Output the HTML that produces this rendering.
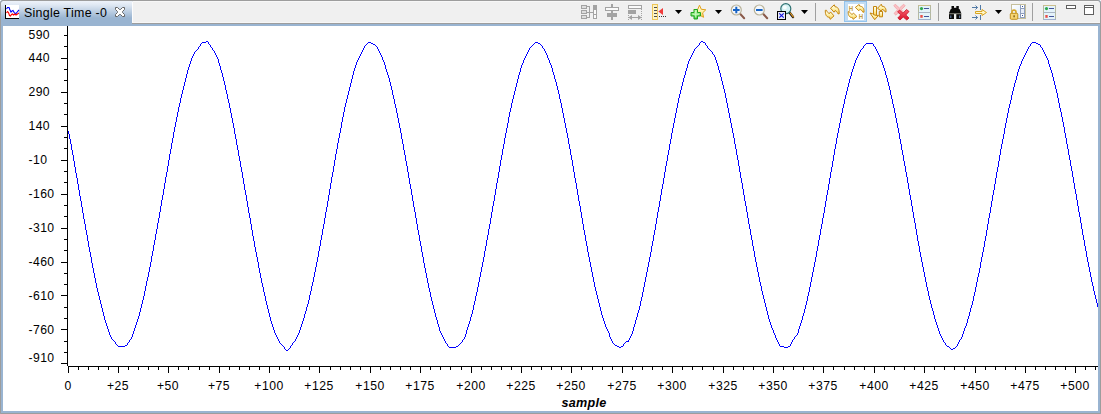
<!DOCTYPE html>
<html><head><meta charset="utf-8"><title>Single Time -0</title>
<style>
html,body{margin:0;padding:0;}
body{width:1101px;height:414px;overflow:hidden;background:#fff;position:relative;font-family:"Liberation Sans",sans-serif;color:#000;}
#frame{position:absolute;left:0;top:0;width:1101px;height:414px;background:#99b4d1;border-radius:3px 3px 0 0;}
#outer{position:absolute;left:0;top:0;width:1100px;height:413px;border-left:1px solid #9d9d9d;border-top:1px solid #9d9d9d;border-right:1px solid #9d9d9d;border-bottom:1px solid #9d9d9d;box-sizing:border-box;width:1101px;height:414px;border-radius:3px 3px 0 0;}
#tab{position:absolute;left:1px;top:1px;width:131px;height:25px;background:linear-gradient(#eef3fa 0px,#dfe8f3 4px,#99b4d1 17px,#99b4d1 25px);border-radius:2px 0 0 0;}
#tabtext{position:absolute;left:24px;top:6px;font-size:12.4px;letter-spacing:0.28px;line-height:14px;white-space:nowrap;}
#bar{position:absolute;left:132px;top:1px;border-radius:0 2px 0 0;width:968px;height:22px;background:#f0f0f0;border-left:1px solid #fcfcfc;border-top:1px solid #f7f7f7;border-bottom:1px solid #f7f7f7;box-sizing:border-box;}
#barline{position:absolute;left:132px;top:23px;width:968px;height:1px;background:#9d9d9d;}
#plot{position:absolute;left:3px;top:26px;width:1095px;height:385px;background:#fff;}
.yl{position:absolute;left:28.5px;width:40px;letter-spacing:0.4px;font-size:12.2px;line-height:16px;height:16px;white-space:nowrap;}
.xl{position:absolute;top:378px;width:61px;text-align:center;letter-spacing:0.45px;font-size:12.2px;line-height:16px;height:16px;white-space:nowrap;}
#xlabel{position:absolute;left:534px;width:100px;top:395px;text-align:center;font-weight:bold;font-style:italic;font-size:12.6px;line-height:16px;letter-spacing:0.3px;}
.ic{position:absolute;}
</style></head><body>
<div id="frame"></div>
<div id="tab"></div>
<div id="bar"></div>
<div id="barline"></div>
<div id="plot"></div>
<div id="outer"></div>
<div id="tabtext">Single Time -0</div>
<svg width="1101" height="26" viewBox="0 0 1101 26" style="position:absolute;left:0;top:0">
<defs>
<linearGradient id="gy" x1="0" y1="0" x2="0" y2="1"><stop offset="0" stop-color="#fffef2"/><stop offset="0.45" stop-color="#fff3b0"/><stop offset="1" stop-color="#f8d058"/></linearGradient>
<linearGradient id="gyr" x1="0" y1="1" x2="0" y2="0"><stop offset="0" stop-color="#fffef2"/><stop offset="0.45" stop-color="#fff3b0"/><stop offset="1" stop-color="#f8d058"/></linearGradient>
<linearGradient id="gg" x1="0" y1="0" x2="0" y2="1"><stop offset="0" stop-color="#c8f8b0"/><stop offset="1" stop-color="#3cc83c"/></linearGradient>
<linearGradient id="gr" x1="0" y1="0" x2="0" y2="1"><stop offset="0" stop-color="#f86070"/><stop offset="1" stop-color="#d81028"/></linearGradient>
<linearGradient id="gl" x1="0" y1="0" x2="1" y2="1"><stop offset="0" stop-color="#ffffff"/><stop offset="1" stop-color="#d4e6f6"/></linearGradient>
<path id="arrU" d="M0,3.4 L3.8,0 L4.5,2 C7,2 8.8,3.700 8.7,9 L7.5,9 C6.7,7.2 6,6.2 4.500,5.800 L3.500,7.400 Z"/>
<g id="dd"><path d="M0,0 L7,0 L3.5,4 Z" fill="#000"/></g>
<g id="props">
 <rect x="0.5" y="0.5" width="12" height="14" fill="#e4f3fa" stroke="#b5b9a0"/>
 <path d="M0.5,7.5 H12.5" stroke="#a9b4c4" fill="none"/>
 <path d="M0.5,0.5 H12.5" stroke="#cdbf8c" fill="none"/>
 <path d="M0,14.5 H13" stroke="#9fb0cf" fill="none"/>
 <circle cx="3.500" cy="3.600" r="1.600" fill="#2fa84f"/>
 <rect x="2.300" y="10" width="2.400" height="2.800" fill="#e8504a"/>
 <rect x="6" y="3" width="5" height="1" fill="#44549a" shape-rendering="crispEdges"/>
 <rect x="6" y="11" width="5" height="1" fill="#44549a" shape-rendering="crispEdges"/>
</g>
</defs>

<!-- tab icon -->
<g shape-rendering="crispEdges">
<rect x="6" y="5" width="13" height="13" fill="#fff"/>
<rect x="5" y="5" width="1" height="14" fill="#000"/>
<rect x="5" y="18" width="14" height="1" fill="#000"/>
</g>
<polyline points="6.5,9 7.5,7.5 9,7.5 10,10 11,12 12,11 13,10.5 14.5,13 16,13.5 18,11 19,10" fill="none" stroke="#0000ff" stroke-width="1.1"/>
<polyline points="6.5,13 7.5,11.5 8.5,12.5 9.5,15.5 10.5,16 11.5,14.5 12.5,14 13.5,15 15,14 16,15 17.5,14 19,13" fill="none" stroke="#ff0000" stroke-width="1.1"/>

<!-- tab close X -->
<polygon points="115.5,7.5 117.5,7.5 119.5,9.5 120.5,9.5 122.5,7.5 124.5,7.5 124.5,9.5 122.5,11.5 122.5,12.5 124.5,14.5 124.5,16.5 122.5,16.5 120.5,14.5 119.5,14.5 117.5,16.5 115.5,16.5 115.5,14.5 117.5,12.5 117.5,11.5 115.5,9.5" fill="#fff" stroke="#646464" stroke-width="1" stroke-linejoin="miter"/>

<!-- icon1: disabled tree -->
<g shape-rendering="crispEdges" fill="none" stroke="#a3a3a3">
<rect x="581.5" y="5.5" width="5" height="3" fill="#dedede"/>
<rect x="581.5" y="10.5" width="5" height="3" fill="#dedede"/>
<rect x="581.5" y="15.5" width="5" height="3" fill="#dedede"/>
<path d="M587,6.5 H589.5 V17.5 H587 M587,12.5 H593"/>
<rect x="593.5" y="5.5" width="3" height="13" fill="#fafafa"/>
<rect x="593" y="5" width="4" height="5" fill="#a3a3a3" stroke="none"/>
<path d="M593,14.5 H597"/>
</g>
<!-- icon2 -->
<g shape-rendering="crispEdges">
<rect x="611" y="4" width="2" height="16" fill="#a3a3a3"/>
<rect x="605.5" y="7.5" width="13" height="3" fill="#fafafa" stroke="#a3a3a3"/>
<rect x="607" y="13" width="10" height="4" fill="#a3a3a3"/>
</g>
<!-- icon3 -->
<g shape-rendering="crispEdges">
<rect x="628.5" y="5.5" width="13" height="3" fill="#fafafa" stroke="#a3a3a3"/>
<rect x="628" y="10" width="8" height="4" fill="#a3a3a3"/>
<path d="M641.5,9 V20 M628.5,15 V20" stroke="#a3a3a3" stroke-dasharray="1 1" fill="none"/>
<rect x="629" y="17" width="12" height="1" fill="#a3a3a3"/>
</g>
<path d="M628.3,17.500 L632,15 L632,20 Z M641.700,17.500 L638,15 L638,20 Z" fill="#a3a3a3"/>

<!-- icon4 ruler -->
<g shape-rendering="crispEdges">
<rect x="652.5" y="4.5" width="5" height="15" fill="#fdf3c4" stroke="#edc558"/>
<rect x="654" y="7" width="3" height="1" fill="#4a4a4a"/>
<rect x="654" y="10" width="3" height="1" fill="#4a4a4a"/>
<rect x="654" y="13" width="3" height="1" fill="#4a4a4a"/>
<rect x="654" y="16" width="3" height="1" fill="#4a4a4a"/>
<rect x="659" y="16" width="1" height="1" fill="#333"/><rect x="661" y="16" width="1" height="1" fill="#333"/><rect x="663" y="16" width="1" height="1" fill="#333"/><rect x="665" y="16" width="1" height="1" fill="#333"/>
</g>
<path d="M658.3,11.5 L663,8 L663,15 Z" fill="#f03c3c"/>
<use href="#dd" x="675" y="10"/>

<!-- icon5 star + plus -->
<path d="M699.5,5.2 L701.3,9.3 L705.8,9.8 L702.6,12.9 L703.6,17.3 L699.5,15.1 L696,17 L696.6,12.9 L693.8,9.8 L697.8,9.3 Z" fill="url(#gy)" stroke="#e2a21c" stroke-width="1" stroke-linejoin="round"/>
<path d="M694,9.5 H697.5 V12.5 H700.5 V16 H697.5 V19 H694 V16 H691 V12.5 H694 Z" fill="url(#gg)" stroke="#1fa61f" stroke-width="1" stroke-linejoin="round"/>
<path d="M695.200,11 H696.300 V13.700 H699 V14.800 H696.300 V17.500 H695.200 V14.800 H692.500 V13.700 H695.200 Z" fill="#d8ffd0" opacity="0.85"/>
<use href="#dd" x="715" y="10"/>

<!-- zoom in -->
<path d="M740.3,14 L744.200,18.200" stroke="#8a5a4a" stroke-width="2" stroke-linecap="round"/>
<circle cx="736.3" cy="10" r="5" fill="#f4f7fb" stroke="#b9b39a" stroke-width="1.2"/>
<path d="M733,10 H739.6 M736.3,6.7 V13.3" stroke="#1763c4" stroke-width="2"/>
<!-- zoom out -->
<path d="M763.3,14 L767.200,18.200" stroke="#8a5a4a" stroke-width="2" stroke-linecap="round"/>
<circle cx="759.3" cy="10" r="5" fill="#f4f7fb" stroke="#b9b39a" stroke-width="1.2"/>
<path d="M756,10 H762.6" stroke="#1763c4" stroke-width="2"/>
<!-- zoom reset -->
<path d="M789.5,12.5 L793,17" stroke="#1a1a1a" stroke-width="2.4" stroke-linecap="round"/>
<path d="M790.3,13 L793.3,16.8" stroke="#f0a020" stroke-width="1.1" stroke-linecap="round"/>
<circle cx="785.8" cy="8.7" r="5" fill="#d6f2f4" stroke="#2f7272" stroke-width="1.2"/>
<circle cx="784.8" cy="7.5" r="2" fill="#ffffff" opacity="0.8"/>
<rect x="777.5" y="11.5" width="8" height="8" fill="#e6e9f6" stroke="#000" shape-rendering="crispEdges"/>
<path d="M779.3,13.3 L783.7,17.7 M783.7,13.3 L779.3,17.7" stroke="#1010e0" stroke-width="1.1"/>
<use href="#dd" x="801" y="10"/>
<rect x="815" y="3" width="1" height="18" fill="#a0a0a0" shape-rendering="crispEdges"/>

<!-- refresh -->
<g fill="url(#gy)" stroke="#c4850c" stroke-width="1" stroke-linejoin="round">
<use href="#arrU" x="830.5" y="4.800"/>
<use href="#arrU" transform="translate(834,19.300) rotate(180)" fill="url(#gyr)"/>
</g>
<!-- selected H refresh -->
<rect x="844.5" y="1.5" width="22" height="20" fill="#c2dcf3" stroke="#93c4ee" shape-rendering="crispEdges"/>
<rect x="848" y="4" width="16" height="16" fill="#fff" shape-rendering="crispEdges"/>
<g fill="url(#gy)" stroke="#c4850c" stroke-width="1" stroke-linejoin="round">
<use href="#arrU" transform="translate(855.3,4.500) scale(1,0.850)"/>
<use href="#arrU" transform="translate(856.9,19.300) rotate(180) scale(1,0.850)" fill="url(#gyr)"/>
</g>
<text x="848.8" y="10.600" font-family="Liberation Sans, sans-serif" font-size="6.500" font-weight="bold" textLength="4.400" lengthAdjust="spacingAndGlyphs" fill="#bf9c45">H</text>
<text x="858.8" y="18.800" font-family="Liberation Sans, sans-serif" font-size="6.500" font-weight="bold" textLength="4.400" lengthAdjust="spacingAndGlyphs" fill="#bf9c45">H</text>
<!-- third refresh icon -->
<g fill="url(#gy)" stroke="#c4850c" stroke-width="1" stroke-linejoin="round">
<rect x="873.5" y="6.500" width="3" height="9"/>
<path d="M870,13 L872.500,13.700 C873.500,15.200 876.500,15.600 878.500,15.300 L874.700,19.700 Z"/>
<rect x="879.300" y="11.500" width="3.200" height="5.300"/>
<path d="M877.500,8.300 L881.300,4.200 L882,6.300 C884.500,6.300 886.200,7.800 886.100,11.800 L885,11.800 C884.300,10.300 883.500,9.700 882,9.500 L881.200,11 Z"/>
</g>
<!-- red X -->
<path d="M895.200,4.200 L899.500,8 L903.700,4.200 L905.200,5.800 L901.300,9.800 L904.500,13.200 L902.500,15 L899.300,11.800 L896,15.200 L894,13.400 L897.500,9.800 L893.800,5.800 Z" fill="#f9c0c4" stroke="#f4a4aa" stroke-width="0.800"/>
<path d="M899.5,10 L903,13.2 L906.5,9.5 L909,11.5 L905.8,15 L909,18 L906.8,20 L903.2,17 L900,20 L897.8,18 L900.8,14.8 L897.6,12 Z" fill="url(#gr)" stroke="#c81022" stroke-width="0.8" stroke-linejoin="round"/>
<!-- props -->
<use href="#props" x="918" y="5"/>
<rect x="938" y="3" width="1" height="18" fill="#a0a0a0" shape-rendering="crispEdges"/>
<!-- binoculars -->
<g fill="#0a0a0a">
<rect x="951.500" y="6" width="2.500" height="3"/><rect x="956.300" y="6" width="2.500" height="3"/>
<rect x="953" y="7.800" width="4.500" height="2"/>
<path d="M950.800,9 H959.500 L961.200,13 V19 H956.300 V14 H954 V19 H949 V13 Z"/>
</g>
<rect x="949" y="13.300" width="12.200" height="0.900" fill="#9a9a90"/>
<rect x="950.300" y="15.500" width="1" height="2.500" fill="#6a8ab8"/><rect x="959.200" y="15.500" width="1" height="2.500" fill="#6a8ab8"/>
<!-- arrow icon -->
<g stroke="#3f6c9c" stroke-width="0.900" fill="none">
<path d="M972,7.5 H977.5 M975.5,5.5 L977.5,7.5 L975.5,9.5 M980.5,5 V10"/>
<path d="M972,17.5 H977.5 M975.5,15.5 L977.5,17.5 L975.5,19.5 M980.5,15 V20"/>
</g>
<path d="M975.5,11.5 H982 V9.5 L986.5,12.5 L982,15.5 V13.5 H975.5 Z" fill="#fff6c8" stroke="#d9a520" stroke-width="1" stroke-linejoin="round"/>
<use href="#dd" x="995" y="10"/>
<!-- lock icon -->
<g shape-rendering="crispEdges">
<rect x="1011.500" y="4.500" width="14" height="14" fill="url(#gl)" stroke="#c5bf9c"/>
<rect x="1020" y="5" width="5" height="13" fill="#8f9fbe"/>
<rect x="1021" y="5" width="3" height="3" fill="#fff"/><rect x="1022" y="6" width="1" height="1" fill="#2a4a9a"/>
<rect x="1021" y="9" width="3" height="4" fill="#e8eef8"/>
<rect x="1021" y="14" width="3" height="3" fill="#fff"/><rect x="1022" y="15" width="1" height="1" fill="#2a4a9a"/>
</g>
<path d="M1012,13.5 V12 C1012,9.5 1016,9.500 1016,12 V13.500" fill="none" stroke="#d9a82a" stroke-width="1.600"/>
<rect x="1010.300" y="13.300" width="7.500" height="6" rx="1" fill="#f6d572" stroke="#b8860b" stroke-width="0.900"/>
<rect x="1013.500" y="15.300" width="1.200" height="2" fill="#6b4a00"/>
<rect x="1032" y="3" width="1" height="18" fill="#a0a0a0" shape-rendering="crispEdges"/>
<use href="#props" x="1043" y="5"/>
<!-- min / max -->
<g shape-rendering="crispEdges" fill="#fff" stroke="#5f5f5f">
<rect x="1066.500" y="5.500" width="9" height="3"/>
<rect x="1084.500" y="5.500" width="9" height="9"/>
<path d="M1084,7.500 H1094" fill="none"/>
</g>
</svg>

<svg width="1101" height="414" viewBox="0 0 1101 414" style="position:absolute;left:0;top:0" shape-rendering="crispEdges"><g fill="#000"><rect x="67" y="26" width="1" height="340"/><rect x="68" y="366" width="1030" height="1"/><rect x="61" y="58" width="6" height="1"/><rect x="61" y="92" width="6" height="1"/><rect x="61" y="126" width="6" height="1"/><rect x="61" y="160" width="6" height="1"/><rect x="61" y="194" width="6" height="1"/><rect x="61" y="228" width="6" height="1"/><rect x="61" y="262" width="6" height="1"/><rect x="61" y="295" width="6" height="1"/><rect x="61" y="329" width="6" height="1"/><rect x="61" y="363" width="6" height="1"/><rect x="64" y="35" width="3" height="1"/><rect x="64" y="46" width="3" height="1"/><rect x="64" y="69" width="3" height="1"/><rect x="64" y="80" width="3" height="1"/><rect x="64" y="103" width="3" height="1"/><rect x="64" y="114" width="3" height="1"/><rect x="64" y="137" width="3" height="1"/><rect x="64" y="148" width="3" height="1"/><rect x="64" y="171" width="3" height="1"/><rect x="64" y="182" width="3" height="1"/><rect x="64" y="205" width="3" height="1"/><rect x="64" y="216" width="3" height="1"/><rect x="64" y="239" width="3" height="1"/><rect x="64" y="250" width="3" height="1"/><rect x="64" y="273" width="3" height="1"/><rect x="64" y="284" width="3" height="1"/><rect x="64" y="307" width="3" height="1"/><rect x="64" y="318" width="3" height="1"/><rect x="64" y="341" width="3" height="1"/><rect x="64" y="352" width="3" height="1"/><rect x="68" y="367" width="1" height="6"/><rect x="78" y="367" width="1" height="3"/><rect x="88" y="367" width="1" height="3"/><rect x="98" y="367" width="1" height="3"/><rect x="108" y="367" width="1" height="3"/><rect x="118" y="367" width="1" height="6"/><rect x="128" y="367" width="1" height="3"/><rect x="138" y="367" width="1" height="3"/><rect x="148" y="367" width="1" height="3"/><rect x="158" y="367" width="1" height="3"/><rect x="168" y="367" width="1" height="6"/><rect x="178" y="367" width="1" height="3"/><rect x="188" y="367" width="1" height="3"/><rect x="199" y="367" width="1" height="3"/><rect x="209" y="367" width="1" height="3"/><rect x="219" y="367" width="1" height="6"/><rect x="229" y="367" width="1" height="3"/><rect x="239" y="367" width="1" height="3"/><rect x="249" y="367" width="1" height="3"/><rect x="259" y="367" width="1" height="3"/><rect x="269" y="367" width="1" height="6"/><rect x="279" y="367" width="1" height="3"/><rect x="289" y="367" width="1" height="3"/><rect x="299" y="367" width="1" height="3"/><rect x="309" y="367" width="1" height="3"/><rect x="319" y="367" width="1" height="6"/><rect x="330" y="367" width="1" height="3"/><rect x="340" y="367" width="1" height="3"/><rect x="350" y="367" width="1" height="3"/><rect x="360" y="367" width="1" height="3"/><rect x="370" y="367" width="1" height="6"/><rect x="380" y="367" width="1" height="3"/><rect x="390" y="367" width="1" height="3"/><rect x="400" y="367" width="1" height="3"/><rect x="410" y="367" width="1" height="3"/><rect x="420" y="367" width="1" height="6"/><rect x="430" y="367" width="1" height="3"/><rect x="440" y="367" width="1" height="3"/><rect x="450" y="367" width="1" height="3"/><rect x="461" y="367" width="1" height="3"/><rect x="471" y="367" width="1" height="6"/><rect x="481" y="367" width="1" height="3"/><rect x="491" y="367" width="1" height="3"/><rect x="501" y="367" width="1" height="3"/><rect x="511" y="367" width="1" height="3"/><rect x="521" y="367" width="1" height="6"/><rect x="531" y="367" width="1" height="3"/><rect x="541" y="367" width="1" height="3"/><rect x="551" y="367" width="1" height="3"/><rect x="561" y="367" width="1" height="3"/><rect x="571" y="367" width="1" height="6"/><rect x="581" y="367" width="1" height="3"/><rect x="592" y="367" width="1" height="3"/><rect x="602" y="367" width="1" height="3"/><rect x="612" y="367" width="1" height="3"/><rect x="622" y="367" width="1" height="6"/><rect x="632" y="367" width="1" height="3"/><rect x="642" y="367" width="1" height="3"/><rect x="652" y="367" width="1" height="3"/><rect x="662" y="367" width="1" height="3"/><rect x="672" y="367" width="1" height="6"/><rect x="682" y="367" width="1" height="3"/><rect x="692" y="367" width="1" height="3"/><rect x="702" y="367" width="1" height="3"/><rect x="713" y="367" width="1" height="3"/><rect x="723" y="367" width="1" height="6"/><rect x="733" y="367" width="1" height="3"/><rect x="743" y="367" width="1" height="3"/><rect x="753" y="367" width="1" height="3"/><rect x="763" y="367" width="1" height="3"/><rect x="773" y="367" width="1" height="6"/><rect x="783" y="367" width="1" height="3"/><rect x="793" y="367" width="1" height="3"/><rect x="803" y="367" width="1" height="3"/><rect x="813" y="367" width="1" height="3"/><rect x="823" y="367" width="1" height="6"/><rect x="833" y="367" width="1" height="3"/><rect x="844" y="367" width="1" height="3"/><rect x="854" y="367" width="1" height="3"/><rect x="864" y="367" width="1" height="3"/><rect x="874" y="367" width="1" height="6"/><rect x="884" y="367" width="1" height="3"/><rect x="894" y="367" width="1" height="3"/><rect x="904" y="367" width="1" height="3"/><rect x="914" y="367" width="1" height="3"/><rect x="924" y="367" width="1" height="6"/><rect x="934" y="367" width="1" height="3"/><rect x="944" y="367" width="1" height="3"/><rect x="954" y="367" width="1" height="3"/><rect x="964" y="367" width="1" height="3"/><rect x="975" y="367" width="1" height="6"/><rect x="985" y="367" width="1" height="3"/><rect x="995" y="367" width="1" height="3"/><rect x="1005" y="367" width="1" height="3"/><rect x="1015" y="367" width="1" height="3"/><rect x="1025" y="367" width="1" height="6"/><rect x="1035" y="367" width="1" height="3"/><rect x="1045" y="367" width="1" height="3"/><rect x="1055" y="367" width="1" height="3"/><rect x="1065" y="367" width="1" height="3"/><rect x="1075" y="367" width="1" height="6"/><rect x="1085" y="367" width="1" height="3"/><rect x="1095" y="367" width="1" height="3"/></g><path d="M68 131h1v3h-1zM69 134h1v5h-1zM70 139h1v5h-1zM71 144h1v6h-1zM72 150h1v5h-1zM73 155h1v6h-1zM74 161h1v6h-1zM75 167h1v6h-1zM76 173h1v5h-1zM77 178h1v6h-1zM78 184h1v6h-1zM79 190h1v6h-1zM80 196h1v5h-1zM81 201h1v6h-1zM82 207h1v6h-1zM83 213h1v6h-1zM84 219h1v5h-1zM85 224h1v6h-1zM86 230h1v5h-1zM87 235h1v6h-1zM88 241h1v6h-1zM89 247h1v5h-1zM90 252h1v5h-1zM91 257h1v6h-1zM92 263h1v5h-1zM93 268h1v5h-1zM94 273h1v5h-1zM95 278h1v5h-1zM96 283h1v5h-1zM97 288h1v4h-1zM98 292h1v4h-1zM99 296h1v4h-1zM100 300h1v4h-1zM101 304h1v4h-1zM102 308h1v4h-1zM103 312h1v4h-1zM104 316h1v4h-1zM105 320h1v3h-1zM106 323h1v3h-1zM107 326h1v3h-1zM108 329h1v3h-1zM109 332h1v3h-1zM110 335h1v2h-1zM111 337h1v2h-1zM112 339h1v1h-1zM113 340h1v1h-1zM114 341h1v1h-1zM115 342h1v2h-1zM116 344h1v1h-1zM117 345h1v1h-1zM118 346h1v1h-1zM119 346h1v1h-1zM120 346h1v1h-1zM121 346h1v1h-1zM122 346h1v1h-1zM123 346h1v1h-1zM124 346h1v1h-1zM125 345h1v1h-1zM126 345h1v1h-1zM127 343h1v2h-1zM128 342h1v1h-1zM129 340h1v2h-1zM130 339h1v1h-1zM131 337h1v2h-1zM132 334h1v3h-1zM133 331h1v3h-1zM134 328h1v3h-1zM135 325h1v3h-1zM136 322h1v3h-1zM137 319h1v3h-1zM138 316h1v3h-1zM139 312h1v4h-1zM140 308h1v4h-1zM141 304h1v4h-1zM142 300h1v4h-1zM143 296h1v4h-1zM144 291h1v5h-1zM145 286h1v5h-1zM146 281h1v5h-1zM147 277h1v4h-1zM148 272h1v5h-1zM149 267h1v5h-1zM150 262h1v5h-1zM151 256h1v6h-1zM152 251h1v5h-1zM153 245h1v6h-1zM154 240h1v5h-1zM155 234h1v6h-1zM156 229h1v5h-1zM157 223h1v6h-1zM158 218h1v5h-1zM159 212h1v6h-1zM160 206h1v6h-1zM161 200h1v6h-1zM162 195h1v5h-1zM163 189h1v6h-1zM164 183h1v6h-1zM165 177h1v6h-1zM166 172h1v5h-1zM167 166h1v6h-1zM168 160h1v6h-1zM169 154h1v6h-1zM170 149h1v5h-1zM171 143h1v6h-1zM172 138h1v5h-1zM173 132h1v6h-1zM174 127h1v5h-1zM175 122h1v5h-1zM176 117h1v5h-1zM177 112h1v5h-1zM178 107h1v5h-1zM179 103h1v4h-1zM180 98h1v5h-1zM181 94h1v4h-1zM182 90h1v4h-1zM183 86h1v4h-1zM184 82h1v4h-1zM185 78h1v4h-1zM186 74h1v4h-1zM187 70h1v4h-1zM188 67h1v3h-1zM189 64h1v3h-1zM190 61h1v3h-1zM191 58h1v3h-1zM192 56h1v2h-1zM193 54h1v2h-1zM194 52h1v2h-1zM195 51h1v1h-1zM196 50h1v1h-1zM197 49h1v1h-1zM198 47h1v2h-1zM199 46h1v1h-1zM200 44h1v2h-1zM201 43h1v1h-1zM202 42h1v1h-1zM203 42h1v1h-1zM204 42h1v1h-1zM205 42h1v1h-1zM206 41h1v1h-1zM207 41h1v1h-1zM208 42h1v2h-1zM209 44h1v1h-1zM210 45h1v2h-1zM211 47h1v1h-1zM212 48h1v2h-1zM213 50h1v1h-1zM214 51h1v2h-1zM215 53h1v2h-1zM216 55h1v2h-1zM217 57h1v2h-1zM218 59h1v4h-1zM219 63h1v3h-1zM220 66h1v4h-1zM221 70h1v3h-1zM222 73h1v4h-1zM223 77h1v4h-1zM224 81h1v4h-1zM225 85h1v5h-1zM226 90h1v4h-1zM227 94h1v5h-1zM228 99h1v4h-1zM229 103h1v5h-1zM230 108h1v5h-1zM231 113h1v5h-1zM232 118h1v5h-1zM233 123h1v5h-1zM234 128h1v6h-1zM235 134h1v5h-1zM236 139h1v6h-1zM237 145h1v5h-1zM238 150h1v6h-1zM239 156h1v5h-1zM240 161h1v6h-1zM241 167h1v5h-1zM242 172h1v6h-1zM243 178h1v6h-1zM244 184h1v6h-1zM245 190h1v5h-1zM246 195h1v6h-1zM247 201h1v6h-1zM248 207h1v6h-1zM249 213h1v5h-1zM250 218h1v6h-1zM251 224h1v6h-1zM252 230h1v6h-1zM253 236h1v5h-1zM254 241h1v6h-1zM255 247h1v5h-1zM256 252h1v5h-1zM257 257h1v5h-1zM258 262h1v6h-1zM259 268h1v5h-1zM260 273h1v5h-1zM261 278h1v5h-1zM262 283h1v4h-1zM263 287h1v5h-1zM264 292h1v4h-1zM265 296h1v5h-1zM266 301h1v4h-1zM267 305h1v4h-1zM268 309h1v4h-1zM269 313h1v4h-1zM270 317h1v4h-1zM271 321h1v3h-1zM272 324h1v3h-1zM273 327h1v3h-1zM274 330h1v3h-1zM275 333h1v2h-1zM276 335h1v2h-1zM277 337h1v2h-1zM278 339h1v2h-1zM279 341h1v2h-1zM280 343h1v1h-1zM281 344h1v1h-1zM282 345h1v1h-1zM283 346h1v1h-1zM284 347h1v2h-1zM285 349h1v1h-1zM286 350h1v1h-1zM287 350h1v1h-1zM288 349h1v1h-1zM289 348h1v1h-1zM290 346h1v2h-1zM291 345h1v1h-1zM292 343h1v2h-1zM293 342h1v1h-1zM294 341h1v1h-1zM295 339h1v2h-1zM296 337h1v2h-1zM297 335h1v2h-1zM298 333h1v2h-1zM299 330h1v3h-1zM300 327h1v3h-1zM301 324h1v3h-1zM302 321h1v3h-1zM303 318h1v3h-1zM304 314h1v4h-1zM305 311h1v3h-1zM306 307h1v4h-1zM307 304h1v3h-1zM308 300h1v4h-1zM309 295h1v5h-1zM310 291h1v4h-1zM311 286h1v5h-1zM312 282h1v4h-1zM313 277h1v5h-1zM314 272h1v5h-1zM315 267h1v5h-1zM316 262h1v5h-1zM317 257h1v5h-1zM318 251h1v6h-1zM319 246h1v5h-1zM320 240h1v6h-1zM321 235h1v5h-1zM322 229h1v6h-1zM323 224h1v5h-1zM324 218h1v6h-1zM325 212h1v6h-1zM326 207h1v5h-1zM327 201h1v6h-1zM328 195h1v6h-1zM329 189h1v6h-1zM330 183h1v6h-1zM331 177h1v6h-1zM332 172h1v5h-1zM333 166h1v6h-1zM334 160h1v6h-1zM335 154h1v6h-1zM336 149h1v5h-1zM337 143h1v6h-1zM338 138h1v5h-1zM339 133h1v5h-1zM340 128h1v5h-1zM341 122h1v6h-1zM342 117h1v5h-1zM343 112h1v5h-1zM344 107h1v5h-1zM345 103h1v4h-1zM346 99h1v4h-1zM347 95h1v4h-1zM348 91h1v4h-1zM349 87h1v4h-1zM350 83h1v4h-1zM351 79h1v4h-1zM352 75h1v4h-1zM353 71h1v4h-1zM354 68h1v3h-1zM355 65h1v3h-1zM356 62h1v3h-1zM357 60h1v2h-1zM358 58h1v2h-1zM359 56h1v2h-1zM360 54h1v2h-1zM361 52h1v2h-1zM362 50h1v2h-1zM363 48h1v2h-1zM364 46h1v2h-1zM365 45h1v1h-1zM366 44h1v1h-1zM367 43h1v1h-1zM368 42h1v1h-1zM369 42h1v1h-1zM370 42h1v1h-1zM371 43h1v1h-1zM372 43h1v1h-1zM373 44h1v1h-1zM374 44h1v1h-1zM375 45h1v1h-1zM376 46h1v1h-1zM377 47h1v2h-1zM378 49h1v2h-1zM379 51h1v2h-1zM380 53h1v2h-1zM381 55h1v2h-1zM382 57h1v3h-1zM383 60h1v2h-1zM384 62h1v3h-1zM385 65h1v4h-1zM386 69h1v3h-1zM387 72h1v3h-1zM388 75h1v3h-1zM389 78h1v4h-1zM390 82h1v4h-1zM391 86h1v4h-1zM392 90h1v5h-1zM393 95h1v4h-1zM394 99h1v5h-1zM395 104h1v4h-1zM396 108h1v5h-1zM397 113h1v5h-1zM398 118h1v5h-1zM399 123h1v5h-1zM400 128h1v5h-1zM401 133h1v6h-1zM402 139h1v5h-1zM403 144h1v6h-1zM404 150h1v5h-1zM405 155h1v6h-1zM406 161h1v5h-1zM407 166h1v6h-1zM408 172h1v6h-1zM409 178h1v6h-1zM410 184h1v5h-1zM411 189h1v6h-1zM412 195h1v6h-1zM413 201h1v6h-1zM414 207h1v5h-1zM415 212h1v6h-1zM416 218h1v6h-1zM417 224h1v6h-1zM418 230h1v5h-1zM419 235h1v6h-1zM420 241h1v5h-1zM421 246h1v6h-1zM422 252h1v5h-1zM423 257h1v6h-1zM424 263h1v5h-1zM425 268h1v5h-1zM426 273h1v5h-1zM427 278h1v5h-1zM428 283h1v5h-1zM429 288h1v4h-1zM430 292h1v5h-1zM431 297h1v4h-1zM432 301h1v4h-1zM433 305h1v4h-1zM434 309h1v4h-1zM435 313h1v4h-1zM436 317h1v3h-1zM437 320h1v4h-1zM438 324h1v3h-1zM439 327h1v4h-1zM440 331h1v2h-1zM441 333h1v2h-1zM442 335h1v2h-1zM443 337h1v2h-1zM444 339h1v2h-1zM445 341h1v2h-1zM446 343h1v1h-1zM447 344h1v2h-1zM448 346h1v1h-1zM449 347h1v1h-1zM450 347h1v1h-1zM451 347h1v1h-1zM452 347h1v1h-1zM453 347h1v1h-1zM454 347h1v1h-1zM455 347h1v1h-1zM456 346h1v1h-1zM457 346h1v1h-1zM458 345h1v1h-1zM459 344h1v1h-1zM460 343h1v1h-1zM461 342h1v1h-1zM462 340h1v2h-1zM463 339h1v1h-1zM464 337h1v2h-1zM465 334h1v3h-1zM466 330h1v4h-1zM467 327h1v3h-1zM468 324h1v3h-1zM469 321h1v3h-1zM470 317h1v4h-1zM471 314h1v3h-1zM472 310h1v4h-1zM473 305h1v5h-1zM474 301h1v4h-1zM475 296h1v5h-1zM476 292h1v4h-1zM477 287h1v5h-1zM478 282h1v5h-1zM479 277h1v5h-1zM480 272h1v5h-1zM481 267h1v5h-1zM482 262h1v5h-1zM483 257h1v5h-1zM484 251h1v6h-1zM485 246h1v5h-1zM486 240h1v6h-1zM487 235h1v5h-1zM488 229h1v6h-1zM489 224h1v5h-1zM490 218h1v6h-1zM491 212h1v6h-1zM492 206h1v6h-1zM493 201h1v5h-1zM494 195h1v6h-1zM495 189h1v6h-1zM496 183h1v6h-1zM497 178h1v5h-1zM498 172h1v6h-1zM499 166h1v6h-1zM500 160h1v6h-1zM501 155h1v5h-1zM502 149h1v6h-1zM503 144h1v5h-1zM504 138h1v6h-1zM505 133h1v5h-1zM506 128h1v5h-1zM507 123h1v5h-1zM508 117h1v6h-1zM509 112h1v5h-1zM510 108h1v4h-1zM511 103h1v5h-1zM512 99h1v4h-1zM513 95h1v4h-1zM514 91h1v4h-1zM515 87h1v4h-1zM516 83h1v4h-1zM517 79h1v4h-1zM518 75h1v4h-1zM519 72h1v3h-1zM520 68h1v4h-1zM521 65h1v3h-1zM522 63h1v2h-1zM523 60h1v3h-1zM524 58h1v2h-1zM525 56h1v2h-1zM526 54h1v2h-1zM527 52h1v2h-1zM528 50h1v2h-1zM529 48h1v2h-1zM530 47h1v1h-1zM531 46h1v1h-1zM532 45h1v1h-1zM533 44h1v1h-1zM534 43h1v1h-1zM535 42h1v1h-1zM536 42h1v1h-1zM537 42h1v1h-1zM538 43h1v1h-1zM539 43h1v1h-1zM540 44h1v1h-1zM541 45h1v1h-1zM542 46h1v2h-1zM543 48h1v1h-1zM544 49h1v2h-1zM545 51h1v2h-1zM546 53h1v2h-1zM547 55h1v3h-1zM548 58h1v2h-1zM549 60h1v3h-1zM550 63h1v2h-1zM551 65h1v3h-1zM552 68h1v4h-1zM553 72h1v3h-1zM554 75h1v4h-1zM555 79h1v3h-1zM556 82h1v4h-1zM557 86h1v4h-1zM558 90h1v4h-1zM559 94h1v5h-1zM560 99h1v4h-1zM561 103h1v5h-1zM562 108h1v5h-1zM563 113h1v5h-1zM564 118h1v5h-1zM565 123h1v5h-1zM566 128h1v5h-1zM567 133h1v5h-1zM568 138h1v6h-1zM569 144h1v5h-1zM570 149h1v6h-1zM571 155h1v5h-1zM572 160h1v6h-1zM573 166h1v6h-1zM574 172h1v6h-1zM575 178h1v5h-1zM576 183h1v6h-1zM577 189h1v6h-1zM578 195h1v6h-1zM579 201h1v5h-1zM580 206h1v6h-1zM581 212h1v6h-1zM582 218h1v6h-1zM583 224h1v6h-1zM584 230h1v5h-1zM585 235h1v6h-1zM586 241h1v5h-1zM587 246h1v6h-1zM588 252h1v5h-1zM589 257h1v5h-1zM590 262h1v5h-1zM591 267h1v5h-1zM592 272h1v5h-1zM593 277h1v5h-1zM594 282h1v5h-1zM595 287h1v4h-1zM596 291h1v4h-1zM597 295h1v4h-1zM598 299h1v4h-1zM599 303h1v4h-1zM600 307h1v4h-1zM601 311h1v4h-1zM602 315h1v3h-1zM603 318h1v3h-1zM604 321h1v3h-1zM605 324h1v3h-1zM606 327h1v2h-1zM607 329h1v2h-1zM608 331h1v2h-1zM609 333h1v4h-1zM610 337h1v2h-1zM611 339h1v2h-1zM612 341h1v2h-1zM613 343h1v1h-1zM614 344h1v1h-1zM615 345h1v1h-1zM616 345h1v1h-1zM617 346h1v1h-1zM618 346h1v1h-1zM619 347h1v1h-1zM620 347h1v1h-1zM621 346h1v1h-1zM622 346h1v1h-1zM623 344h1v2h-1zM624 343h1v1h-1zM625 342h1v1h-1zM626 341h1v1h-1zM627 341h1v1h-1zM628 340h1v2h-1zM629 338h1v2h-1zM630 336h1v2h-1zM631 334h1v2h-1zM632 331h1v3h-1zM633 327h1v4h-1zM634 324h1v3h-1zM635 320h1v4h-1zM636 317h1v3h-1zM637 313h1v4h-1zM638 310h1v3h-1zM639 306h1v4h-1zM640 301h1v5h-1zM641 297h1v4h-1zM642 292h1v5h-1zM643 287h1v5h-1zM644 282h1v5h-1zM645 277h1v5h-1zM646 272h1v5h-1zM647 267h1v5h-1zM648 262h1v5h-1zM649 257h1v5h-1zM650 252h1v5h-1zM651 246h1v6h-1zM652 241h1v5h-1zM653 235h1v6h-1zM654 230h1v5h-1zM655 224h1v6h-1zM656 218h1v6h-1zM657 212h1v6h-1zM658 207h1v5h-1zM659 201h1v6h-1zM660 195h1v6h-1zM661 189h1v6h-1zM662 184h1v5h-1zM663 178h1v6h-1zM664 172h1v6h-1zM665 166h1v6h-1zM666 161h1v5h-1zM667 155h1v6h-1zM668 150h1v5h-1zM669 144h1v6h-1zM670 139h1v5h-1zM671 133h1v6h-1zM672 128h1v5h-1zM673 123h1v5h-1zM674 118h1v5h-1zM675 113h1v5h-1zM676 108h1v5h-1zM677 103h1v5h-1zM678 98h1v5h-1zM679 94h1v4h-1zM680 90h1v4h-1zM681 86h1v4h-1zM682 82h1v4h-1zM683 78h1v4h-1zM684 75h1v3h-1zM685 71h1v4h-1zM686 68h1v3h-1zM687 64h1v4h-1zM688 61h1v3h-1zM689 59h1v2h-1zM690 57h1v2h-1zM691 55h1v2h-1zM692 53h1v2h-1zM693 51h1v2h-1zM694 49h1v2h-1zM695 48h1v1h-1zM696 47h1v1h-1zM697 46h1v1h-1zM698 45h1v1h-1zM699 43h1v2h-1zM700 42h1v1h-1zM701 41h1v1h-1zM702 41h1v1h-1zM703 42h1v1h-1zM704 42h1v1h-1zM705 43h1v2h-1zM706 45h1v1h-1zM707 46h1v2h-1zM708 48h1v1h-1zM709 49h1v1h-1zM710 50h1v1h-1zM711 51h1v1h-1zM712 52h1v2h-1zM713 54h1v1h-1zM714 55h1v2h-1zM715 57h1v3h-1zM716 60h1v3h-1zM717 63h1v3h-1zM718 66h1v4h-1zM719 70h1v3h-1zM720 73h1v4h-1zM721 77h1v4h-1zM722 81h1v4h-1zM723 85h1v4h-1zM724 89h1v4h-1zM725 93h1v5h-1zM726 98h1v5h-1zM727 103h1v5h-1zM728 108h1v5h-1zM729 113h1v5h-1zM730 118h1v5h-1zM731 123h1v5h-1zM732 128h1v5h-1zM733 133h1v5h-1zM734 138h1v6h-1zM735 144h1v5h-1zM736 149h1v6h-1zM737 155h1v5h-1zM738 160h1v6h-1zM739 166h1v6h-1zM740 172h1v6h-1zM741 178h1v5h-1zM742 183h1v6h-1zM743 189h1v6h-1zM744 195h1v6h-1zM745 201h1v5h-1zM746 206h1v6h-1zM747 212h1v6h-1zM748 218h1v6h-1zM749 224h1v5h-1zM750 229h1v6h-1zM751 235h1v5h-1zM752 240h1v6h-1zM753 246h1v5h-1zM754 251h1v6h-1zM755 257h1v5h-1zM756 262h1v5h-1zM757 267h1v5h-1zM758 272h1v5h-1zM759 277h1v5h-1zM760 282h1v4h-1zM761 286h1v5h-1zM762 291h1v4h-1zM763 295h1v4h-1zM764 299h1v4h-1zM765 303h1v4h-1zM766 307h1v4h-1zM767 311h1v4h-1zM768 315h1v4h-1zM769 319h1v3h-1zM770 322h1v3h-1zM771 325h1v3h-1zM772 328h1v2h-1zM773 330h1v3h-1zM774 333h1v2h-1zM775 335h1v3h-1zM776 338h1v2h-1zM777 340h1v2h-1zM778 342h1v2h-1zM779 344h1v2h-1zM780 346h1v1h-1zM781 346h1v1h-1zM782 346h1v1h-1zM783 346h1v1h-1zM784 347h1v1h-1zM785 347h1v1h-1zM786 347h1v1h-1zM787 347h1v1h-1zM788 346h1v1h-1zM789 346h1v1h-1zM790 344h1v2h-1zM791 342h1v2h-1zM792 340h1v2h-1zM793 339h1v1h-1zM794 337h1v2h-1zM795 336h1v1h-1zM796 335h1v1h-1zM797 333h1v2h-1zM798 329h1v4h-1zM799 326h1v3h-1zM800 323h1v3h-1zM801 320h1v3h-1zM802 316h1v4h-1zM803 313h1v3h-1zM804 309h1v4h-1zM805 305h1v4h-1zM806 301h1v4h-1zM807 296h1v5h-1zM808 292h1v4h-1zM809 287h1v5h-1zM810 282h1v5h-1zM811 277h1v5h-1zM812 272h1v5h-1zM813 267h1v5h-1zM814 262h1v5h-1zM815 257h1v5h-1zM816 251h1v6h-1zM817 246h1v5h-1zM818 240h1v6h-1zM819 235h1v5h-1zM820 229h1v6h-1zM821 224h1v5h-1zM822 218h1v6h-1zM823 213h1v5h-1zM824 207h1v6h-1zM825 201h1v6h-1zM826 195h1v6h-1zM827 190h1v5h-1zM828 184h1v6h-1zM829 178h1v6h-1zM830 172h1v6h-1zM831 167h1v5h-1zM832 161h1v6h-1zM833 155h1v6h-1zM834 149h1v6h-1zM835 144h1v5h-1zM836 138h1v6h-1zM837 133h1v5h-1zM838 128h1v5h-1zM839 123h1v5h-1zM840 118h1v5h-1zM841 113h1v5h-1zM842 108h1v5h-1zM843 104h1v4h-1zM844 99h1v5h-1zM845 95h1v4h-1zM846 91h1v4h-1zM847 87h1v4h-1zM848 83h1v4h-1zM849 79h1v4h-1zM850 76h1v3h-1zM851 72h1v4h-1zM852 69h1v3h-1zM853 66h1v3h-1zM854 63h1v3h-1zM855 60h1v3h-1zM856 58h1v2h-1zM857 56h1v2h-1zM858 54h1v2h-1zM859 52h1v2h-1zM860 50h1v2h-1zM861 49h1v1h-1zM862 48h1v1h-1zM863 46h1v2h-1zM864 45h1v1h-1zM865 44h1v1h-1zM866 43h1v1h-1zM867 43h1v1h-1zM868 43h1v1h-1zM869 43h1v1h-1zM870 43h1v1h-1zM871 43h1v1h-1zM872 43h1v1h-1zM873 44h1v2h-1zM874 46h1v1h-1zM875 47h1v2h-1zM876 49h1v2h-1zM877 51h1v2h-1zM878 53h1v2h-1zM879 55h1v2h-1zM880 57h1v3h-1zM881 60h1v2h-1zM882 62h1v3h-1zM883 65h1v3h-1zM884 68h1v3h-1zM885 71h1v4h-1zM886 75h1v3h-1zM887 78h1v4h-1zM888 82h1v4h-1zM889 86h1v4h-1zM890 90h1v5h-1zM891 95h1v4h-1zM892 99h1v5h-1zM893 104h1v4h-1zM894 108h1v5h-1zM895 113h1v5h-1zM896 118h1v5h-1zM897 123h1v5h-1zM898 128h1v5h-1zM899 133h1v6h-1zM900 139h1v5h-1zM901 144h1v6h-1zM902 150h1v5h-1zM903 155h1v6h-1zM904 161h1v5h-1zM905 166h1v6h-1zM906 172h1v5h-1zM907 177h1v6h-1zM908 183h1v6h-1zM909 189h1v6h-1zM910 195h1v5h-1zM911 200h1v6h-1zM912 206h1v6h-1zM913 212h1v6h-1zM914 218h1v5h-1zM915 223h1v6h-1zM916 229h1v6h-1zM917 235h1v6h-1zM918 241h1v5h-1zM919 246h1v6h-1zM920 252h1v5h-1zM921 257h1v5h-1zM922 262h1v5h-1zM923 267h1v5h-1zM924 272h1v5h-1zM925 277h1v5h-1zM926 282h1v5h-1zM927 287h1v4h-1zM928 291h1v5h-1zM929 296h1v4h-1zM930 300h1v4h-1zM931 304h1v4h-1zM932 308h1v3h-1zM933 311h1v4h-1zM934 315h1v4h-1zM935 319h1v3h-1zM936 322h1v3h-1zM937 325h1v3h-1zM938 328h1v3h-1zM939 331h1v3h-1zM940 334h1v2h-1zM941 336h1v2h-1zM942 338h1v2h-1zM943 340h1v2h-1zM944 342h1v1h-1zM945 343h1v2h-1zM946 345h1v1h-1zM947 346h1v1h-1zM948 346h1v1h-1zM949 347h1v1h-1zM950 348h1v1h-1zM951 349h1v1h-1zM952 349h1v1h-1zM953 348h1v1h-1zM954 348h1v1h-1zM955 347h1v1h-1zM956 346h1v1h-1zM957 344h1v2h-1zM958 342h1v2h-1zM959 340h1v2h-1zM960 339h1v1h-1zM961 337h1v2h-1zM962 334h1v3h-1zM963 331h1v3h-1zM964 328h1v3h-1zM965 326h1v2h-1zM966 323h1v3h-1zM967 319h1v4h-1zM968 316h1v3h-1zM969 312h1v4h-1zM970 308h1v4h-1zM971 305h1v3h-1zM972 301h1v4h-1zM973 296h1v5h-1zM974 292h1v4h-1zM975 287h1v5h-1zM976 282h1v5h-1zM977 277h1v5h-1zM978 273h1v4h-1zM979 268h1v5h-1zM980 262h1v6h-1zM981 257h1v5h-1zM982 252h1v5h-1zM983 247h1v5h-1zM984 241h1v6h-1zM985 236h1v5h-1zM986 230h1v6h-1zM987 224h1v6h-1zM988 218h1v6h-1zM989 213h1v5h-1zM990 207h1v6h-1zM991 201h1v6h-1zM992 195h1v6h-1zM993 190h1v5h-1zM994 184h1v6h-1zM995 178h1v6h-1zM996 172h1v6h-1zM997 167h1v5h-1zM998 161h1v6h-1zM999 155h1v6h-1zM1000 149h1v6h-1zM1001 144h1v5h-1zM1002 139h1v5h-1zM1003 134h1v5h-1zM1004 128h1v6h-1zM1005 123h1v5h-1zM1006 118h1v5h-1zM1007 113h1v5h-1zM1008 108h1v5h-1zM1009 104h1v4h-1zM1010 100h1v4h-1zM1011 95h1v5h-1zM1012 91h1v4h-1zM1013 87h1v4h-1zM1014 83h1v4h-1zM1015 80h1v3h-1zM1016 76h1v4h-1zM1017 72h1v4h-1zM1018 69h1v3h-1zM1019 66h1v3h-1zM1020 64h1v2h-1zM1021 61h1v3h-1zM1022 59h1v2h-1zM1023 57h1v2h-1zM1024 55h1v2h-1zM1025 53h1v2h-1zM1026 51h1v2h-1zM1027 49h1v2h-1zM1028 47h1v2h-1zM1029 46h1v1h-1zM1030 44h1v2h-1zM1031 43h1v1h-1zM1032 42h1v1h-1zM1033 42h1v1h-1zM1034 42h1v1h-1zM1035 42h1v1h-1zM1036 43h1v1h-1zM1037 43h1v1h-1zM1038 44h1v1h-1zM1039 44h1v1h-1zM1040 45h1v2h-1zM1041 47h1v1h-1zM1042 48h1v2h-1zM1043 50h1v2h-1zM1044 52h1v2h-1zM1045 54h1v2h-1zM1046 56h1v2h-1zM1047 58h1v2h-1zM1048 60h1v4h-1zM1049 64h1v3h-1zM1050 67h1v3h-1zM1051 70h1v3h-1zM1052 73h1v4h-1zM1053 77h1v4h-1zM1054 81h1v4h-1zM1055 85h1v4h-1zM1056 89h1v4h-1zM1057 93h1v5h-1zM1058 98h1v5h-1zM1059 103h1v5h-1zM1060 108h1v4h-1zM1061 112h1v5h-1zM1062 117h1v5h-1zM1063 122h1v5h-1zM1064 127h1v6h-1zM1065 133h1v5h-1zM1066 138h1v6h-1zM1067 144h1v5h-1zM1068 149h1v6h-1zM1069 155h1v5h-1zM1070 160h1v6h-1zM1071 166h1v5h-1zM1072 171h1v6h-1zM1073 177h1v6h-1zM1074 183h1v6h-1zM1075 189h1v5h-1zM1076 194h1v6h-1zM1077 200h1v6h-1zM1078 206h1v6h-1zM1079 212h1v5h-1zM1080 217h1v6h-1zM1081 223h1v6h-1zM1082 229h1v6h-1zM1083 235h1v5h-1zM1084 240h1v6h-1zM1085 246h1v5h-1zM1086 251h1v6h-1zM1087 257h1v5h-1zM1088 262h1v5h-1zM1089 267h1v5h-1zM1090 272h1v5h-1zM1091 277h1v5h-1zM1092 282h1v4h-1zM1093 286h1v5h-1zM1094 291h1v4h-1zM1095 295h1v4h-1zM1096 299h1v4h-1zM1097 303h1v4h-1z" fill="#0000ff" shape-rendering="crispEdges"/></svg>
<div class="yl" style="top:27px">590</div><div class="yl" style="top:50px">440</div><div class="yl" style="top:84px">290</div><div class="yl" style="top:118px">140</div><div class="yl" style="top:152px">-10</div><div class="yl" style="top:186px">-160</div><div class="yl" style="top:220px">-310</div><div class="yl" style="top:254px">-460</div><div class="yl" style="top:288px">-610</div><div class="yl" style="top:322px">-760</div><div class="yl" style="top:350px">-910</div><div class="xl" style="left:37.5px">0</div><div class="xl" style="left:87.5px">+25</div><div class="xl" style="left:137.5px">+50</div><div class="xl" style="left:188.5px">+75</div><div class="xl" style="left:238.5px">+100</div><div class="xl" style="left:288.5px">+125</div><div class="xl" style="left:339.5px">+150</div><div class="xl" style="left:389.5px">+175</div><div class="xl" style="left:440.5px">+200</div><div class="xl" style="left:490.5px">+225</div><div class="xl" style="left:540.5px">+250</div><div class="xl" style="left:591.5px">+275</div><div class="xl" style="left:641.5px">+300</div><div class="xl" style="left:692.5px">+325</div><div class="xl" style="left:742.5px">+350</div><div class="xl" style="left:792.5px">+375</div><div class="xl" style="left:843.5px">+400</div><div class="xl" style="left:893.5px">+425</div><div class="xl" style="left:944.5px">+450</div><div class="xl" style="left:994.5px">+475</div><div class="xl" style="left:1044.5px">+500</div>
<div id="xlabel">sample</div>
</body></html>
